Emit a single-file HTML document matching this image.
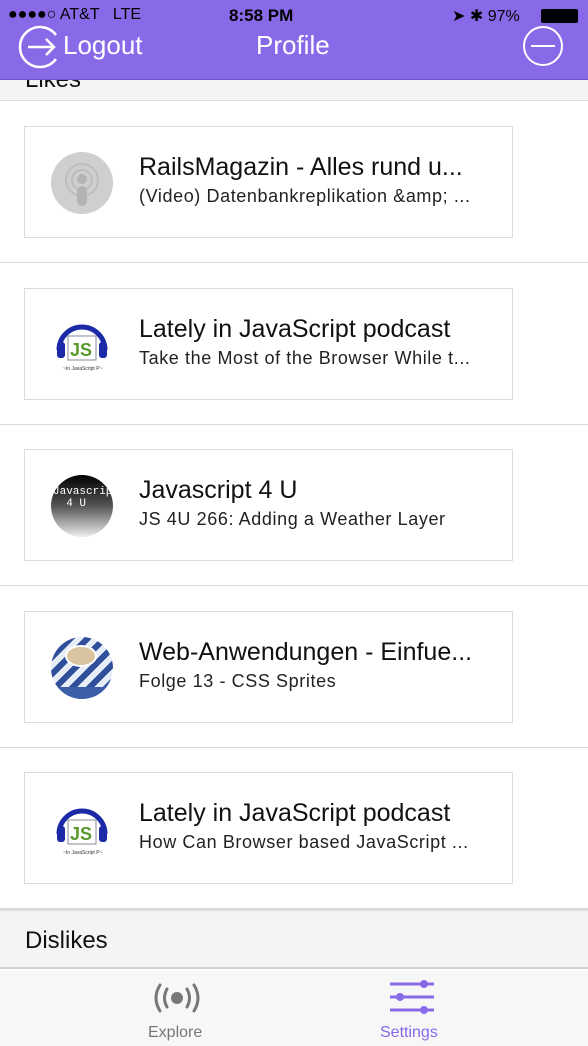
<!DOCTYPE html>
<html><head><meta charset="utf-8"><style>
*{margin:0;padding:0;box-sizing:border-box}
body{width:588px;height:1046px;overflow:hidden;background:#fff;font-family:"Liberation Sans",Arial,sans-serif;position:relative}
.hdr{position:absolute;left:0;top:0;width:588px;height:80px;background:#8869e8;border-bottom:1px solid #6d52c8;color:#fff;z-index:5}
.sb{position:absolute;top:6px;font-size:17px;color:#000}
.likes{position:absolute;top:60px;left:0;width:588px;height:41px;background:#f4f4f4;border-bottom:1px solid #ddd}
.row{position:absolute;left:0;width:588px;height:162px;border-bottom:1px solid #d9d9d9}
.card{position:absolute;left:24px;top:25px;width:489px;height:112px;border:1.5px solid #dcdcdc;background:#fff}
.ic{position:absolute;left:26px;top:25px;width:62px;height:62px;border-radius:50%;overflow:hidden}
.t{position:absolute;left:114px;top:26px;font-size:25px;color:#111;white-space:nowrap}
.s{position:absolute;left:114px;top:59px;font-size:18px;color:#222;white-space:nowrap;letter-spacing:0.6px}
.dis{position:absolute;top:909px;left:0;width:588px;height:60px;background:#f4f4f4;border-top:2px solid #ddd;border-bottom:2px solid #d0d0d0;font-size:24px;color:#111;padding:16px 0 0 25px}
.tab{position:absolute;top:971px;left:0;width:588px;height:75px;background:#f7f7f7}
.tl{position:absolute;top:53px;font-size:16px}
</style></head><body>
<div class="hdr">
 <div class="sb" style="left:8px;font-size:16px">●●●●○ AT&amp;T&nbsp;&nbsp; LTE</div>
 <div class="sb" style="left:229px;font-weight:bold">8:58 PM</div>
 <div class="sb" style="left:452px;font-size:16px">➤ ✱ 97%</div>
 <div style="position:absolute;left:541px;top:9px;width:37px;height:14px;border:1px solid #000;background:#000;border-radius:2px"></div>
 <svg style="position:absolute;left:12px;top:24px" width="50" height="46" viewBox="0 0 50 46"><path d="M44 11 A20 20 0 1 0 44 35" fill="none" stroke="#fff" stroke-width="2.5"/><path d="M16 23 H42 M34 15 L42 23 L34 31" fill="none" stroke="#fff" stroke-width="2.5"/></svg>
 <div style="position:absolute;left:63px;top:30px;font-size:26px">Logout</div>
 <div style="position:absolute;left:256px;top:30px;font-size:26px">Profile</div>
 <svg style="position:absolute;left:521px;top:24px" width="44" height="44"><circle cx="22" cy="22" r="19" fill="none" stroke="#fff" stroke-width="2"/><path d="M10 22H34" stroke="#fff" stroke-width="2"/></svg>
</div>
<div class="likes"><div style="position:absolute;left:25px;top:6px;font-size:24px;color:#111">Likes</div></div>

<div class="row" style="top:101px"><div class="card"><div class="ic" style="background:#cfcfcf"><svg width="62" height="62"><circle cx="31" cy="28" r="16" fill="none" stroke="#bdbdbd" stroke-width="2"/><circle cx="31" cy="28" r="10" fill="none" stroke="#bdbdbd" stroke-width="2"/><circle cx="31" cy="27" r="5" fill="#b4b4b4"/><rect x="26" y="34" width="10" height="20" rx="5" fill="#b4b4b4"/></svg></div><div class="t">RailsMagazin - Alles rund u...</div><div class="s">(Video) Datenbankreplikation &amp;amp; ...</div></div></div>

<div class="row" style="top:263px"><div class="card"><div class="ic" style="border-radius:0;background:#fff"><svg width="62" height="62"><path d="M8 36 A23 23 0 0 1 54 36" fill="none" stroke="#1c2aa8" stroke-width="5"/><rect x="6" y="28" width="8" height="16" rx="3" fill="#1c2aa8"/><rect x="48" y="28" width="8" height="16" rx="3" fill="#1c2aa8"/><rect x="17" y="22" width="28" height="24" fill="#fff" stroke="#889" stroke-width="1"/><text x="19" y="42" font-size="18" font-weight="bold" fill="#5a9a2a" font-family="Liberation Sans">JS</text><text x="12" y="56" font-size="5" fill="#333">~In JavaScript P~</text></svg></div><div class="t">Lately in JavaScript podcast</div><div class="s">Take the Most of the Browser While t...</div></div></div>

<div class="row" style="top:424px"><div class="card"><div class="ic" style="background:linear-gradient(#000 0%,#555 50%,#eee 100%)"><div style="color:#fff;font-size:11px;position:absolute;left:2px;top:11px;font-family:'Liberation Mono',monospace">Javascript<br>&nbsp;&nbsp;4 U</div></div><div class="t">Javascript 4 U</div><div class="s">JS 4U 266: Adding a Weather Layer</div></div></div>

<div class="row" style="top:586px"><div class="card"><div class="ic" style="background:repeating-linear-gradient(135deg,#2f4f9a 0 6px,#e8eef8 6px 12px)"><div style="position:absolute;left:14px;top:8px;width:32px;height:22px;border-radius:50%;background:#d8c4a0;border:2px solid #fff"></div><div style="position:absolute;left:0;bottom:0;width:62px;height:12px;background:#3a5fa8"></div></div><div class="t">Web-Anwendungen - Einfue...</div><div class="s">Folge 13 - CSS Sprites</div></div></div>

<div class="row" style="top:747px"><div class="card"><div class="ic" style="border-radius:0;background:#fff"><svg width="62" height="62"><path d="M8 36 A23 23 0 0 1 54 36" fill="none" stroke="#1c2aa8" stroke-width="5"/><rect x="6" y="28" width="8" height="16" rx="3" fill="#1c2aa8"/><rect x="48" y="28" width="8" height="16" rx="3" fill="#1c2aa8"/><rect x="17" y="22" width="28" height="24" fill="#fff" stroke="#889" stroke-width="1"/><text x="19" y="42" font-size="18" font-weight="bold" fill="#5a9a2a" font-family="Liberation Sans">JS</text><text x="12" y="56" font-size="5" fill="#333">~In JavaScript P~</text></svg></div><div class="t">Lately in JavaScript podcast</div><div class="s">How Can Browser based JavaScript ...</div></div></div>

<div class="dis">Dislikes</div>
<div class="tab">
 <svg style="position:absolute;left:150px;top:8px" width="54" height="40"><path d="M10 6 Q2 19 10 32 M44 6 Q52 19 44 32" fill="none" stroke="#777" stroke-width="3" stroke-linecap="round"/><path d="M17 10 Q12 19 17 28 M37 10 Q42 19 37 28" fill="none" stroke="#777" stroke-width="3" stroke-linecap="round"/><circle cx="27" cy="19" r="6" fill="#777"/></svg>
 <div class="tl" style="left:148px;color:#777">Explore</div>
 <svg style="position:absolute;left:388px;top:8px" width="48" height="40"><g stroke="#8869e8" stroke-width="3"><path d="M2 5H46M2 18H46M2 31H46"/></g><circle cx="36" cy="5" r="4" fill="#8869e8"/><circle cx="12" cy="18" r="4" fill="#8869e8"/><circle cx="36" cy="31" r="4" fill="#8869e8"/></svg>
 <div class="tl" style="left:380px;color:#8869e8">Settings</div>
</div>
</body></html>
